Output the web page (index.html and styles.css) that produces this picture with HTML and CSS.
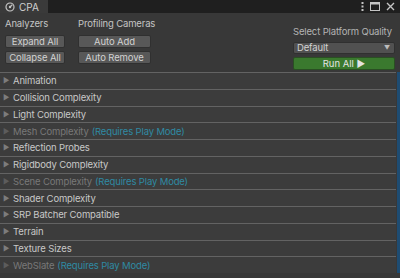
FILE: index.html
```html
<!DOCTYPE html>
<html lang="en">
<head>
  <meta charset="UTF-8" />
  <title>CPA</title>
  <link rel="stylesheet" href="styles.css">
</head>
<body>
  <div class="window">
    <div class="tabbar">
      <div class="tab">
        <svg class="tab-icon" width="10" height="10" viewBox="0 0 10 10">
          <circle cx="5" cy="5" r="4" fill="none" stroke="#c4c4c4" stroke-width="1.2"/>
          <line x1="5" y1="5" x2="7.4" y2="2.6" stroke="#c4c4c4" stroke-width="1.3"/>
          <circle cx="5" cy="5" r="1.2" fill="#c4c4c4"/>
        </svg>
        <span>CPA</span>
      </div>
      <div class="tab-tools">
        <svg width="3" height="9" viewBox="0 0 3 9">
          <rect x="0.5" y="0" width="2" height="2" fill="#c4c4c4"/>
          <rect x="0.5" y="3.5" width="2" height="2" fill="#c4c4c4"/>
          <rect x="0.5" y="7" width="2" height="2" fill="#c4c4c4"/>
        </svg>
        <svg width="10" height="9" viewBox="0 0 10 9">
          <rect x="0.5" y="0.5" width="9" height="8" fill="none" stroke="#c4c4c4"/>
          <rect x="0.5" y="0.5" width="9" height="2" fill="#c4c4c4"/>
        </svg>
        <svg width="9" height="9" viewBox="0 0 9 9">
          <path d="M1 1 L8 8 M8 1 L1 8" stroke="#c4c4c4" stroke-width="1.4"/>
        </svg>
      </div>
    </div>

    <div class="toolbar">
      <div class="group">
        <div class="label">Analyzers</div>
        <button class="btn btn-narrow">Expand All</button>
        <button class="btn btn-narrow">Collapse All</button>
      </div>
      <div class="group">
        <div class="label">Profiling Cameras</div>
        <button class="btn btn-wide">Auto Add</button>
        <button class="btn btn-wide">Auto Remove</button>
      </div>
      <div class="group group-right">
        <div class="label">Select Platform Quality</div>
        <div class="dropdown">
          <span>Default</span>
          <span class="caret">&#9660;</span>
        </div>
        <button class="run">Run All &#9654;</button>
      </div>
    </div>

    <div class="list">
      <div class="row"><span class="arrow">&#9654;</span>Animation</div>
      <div class="row"><span class="arrow">&#9654;</span>Collision Complexity</div>
      <div class="row"><span class="arrow">&#9654;</span>Light Complexity</div>
      <div class="row disabled"><span class="arrow">&#9654;</span>Mesh Complexity <span class="note">(Requires Play Mode)</span></div>
      <div class="row"><span class="arrow">&#9654;</span>Reflection Probes</div>
      <div class="row"><span class="arrow">&#9654;</span>Rigidbody Complexity</div>
      <div class="row disabled"><span class="arrow">&#9654;</span>Scene Complexity <span class="note">(Requires Play Mode)</span></div>
      <div class="row"><span class="arrow">&#9654;</span>Shader Complexity</div>
      <div class="row"><span class="arrow">&#9654;</span>SRP Batcher Compatible</div>
      <div class="row"><span class="arrow">&#9654;</span>Terrain</div>
      <div class="row"><span class="arrow">&#9654;</span>Texture Sizes</div>
      <div class="row disabled"><span class="arrow">&#9654;</span>WebSlate <span class="note">(Requires Play Mode)</span></div>
    </div>
  </div>
</body>
</html>
```

FILE: styles.css
```css
* {
  box-sizing: border-box;
}

html, body {
  margin: 0;
  padding: 0;
}

body {
  width: 400px;
  height: 278px;
  overflow: hidden;
  background: #383838;
  font-family: Inter, 'Liberation Sans', sans-serif;
  font-size: 9.5px;
  letter-spacing: -0.15px;
  color: #c4c4c4;
}

.window {
  display: flex;
  flex-direction: column;
}

/* tab strip */
.tabbar {
  height: 13px;
  background: #1f1f1f;
  display: flex;
  justify-content: space-between;
  align-items: stretch;
}

.tab {
  width: 48px;
  background: #3a3a3a;
  display: flex;
  align-items: center;
  gap: 4px;
  padding-left: 5px;
  font-size: 10px;
  letter-spacing: 0;
  color: #d0d0d0;
}

.tab-tools {
  display: flex;
  align-items: center;
  gap: 6px;
  padding-right: 5px;
}

/* top controls */
.toolbar {
  display: flex;
  padding: 5px 5px 8px 5px;
  height: 59px;
}

.group {
  display: flex;
  flex-direction: column;
  gap: 3px;
  margin-right: 13px;
}

.group-right {
  margin-left: auto;
  margin-right: 0;
  padding-top: 8px;
  width: 102px;
}

.label {
  line-height: 12px;
  height: 12px;
  margin-bottom: 2px;
  color: #c4c4c4;
  white-space: nowrap;
}

.group-right .label {
  margin-bottom: 1px;
  color: #b4b4b4;
}

.btn {
  height: 13px;
  padding: 0;
  border: 1px solid #303030;
  border-radius: 2px;
  background: #585858;
  color: #d2d2d2;
  font-family: inherit;
  font-size: 9.5px;
  letter-spacing: -0.1px;
  line-height: 11px;
}

.btn-narrow {
  width: 60px;
}

.btn-wide {
  width: 73px;
}

.dropdown {
  height: 12px;
  background: #515151;
  border: 1px solid #303030;
  border-radius: 2px;
  display: flex;
  justify-content: space-between;
  align-items: center;
  padding: 0 4px 0 3px;
  color: #d2d2d2;
  line-height: 10px;
}

.caret {
  font-size: 6px;
  color: #bdbdbd;
}

.run {
  height: 15px;
  padding: 0;
  border: 1px solid #2a4f23;
  border-radius: 2px;
  background: #3a792e;
  color: #e4e4e4;
  font-family: inherit;
  font-size: 9.5px;
}

/* analyzer foldouts */
.list {
  display: flex;
  flex-direction: column;
  border-right: 3px solid #1e4c72;
  padding-right: 1px;
}

.row {
  height: 16.75px;
  background: #3c3c3c;
  border-top: 1px solid #636363;
  display: flex;
  align-items: center;
  padding-left: 3px;
  color: #c8c8c8;
  white-space: nowrap;
}

.arrow {
  font-size: 7px;
  color: #7c7c7c;
  width: 10px;
}

.disabled {
  color: #787878;
}

.disabled .arrow {
  color: #5c5c5c;
}

.note {
  color: #2f8aa3;
  margin-left: 3px;
}
```
